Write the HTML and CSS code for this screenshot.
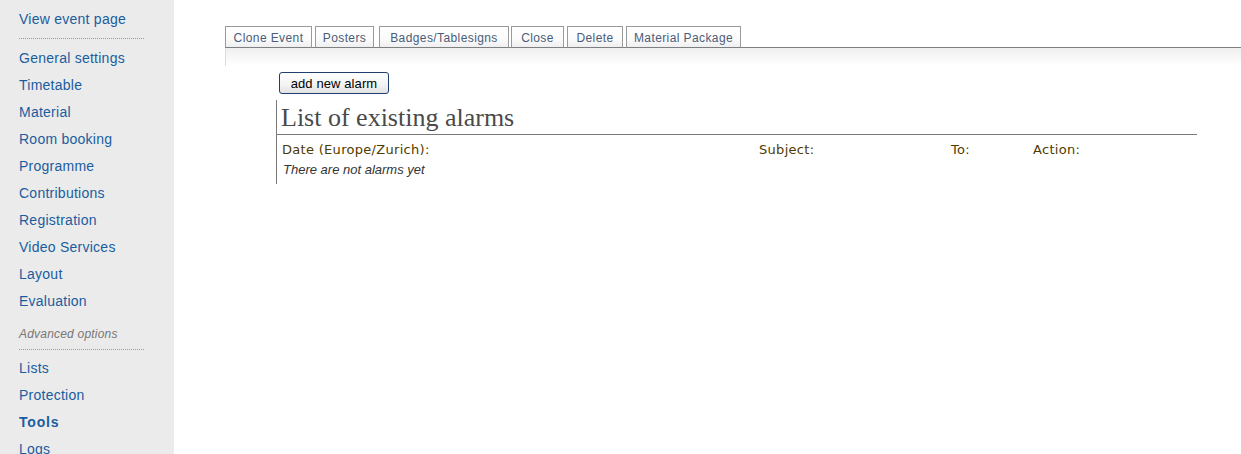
FILE: index.html
```html
<!DOCTYPE html>
<html>
<head>
<meta charset="utf-8">
<link rel="stylesheet" href="styles.css">
</head>
<body>
<div class="page">
  <nav class="sidebar">
    <a class="nav-item" href="#">View event page</a>
    <div class="sep sep-top"></div>
    <a class="nav-item" href="#">General settings</a>
    <a class="nav-item" href="#">Timetable</a>
    <a class="nav-item" href="#">Material</a>
    <a class="nav-item" href="#">Room booking</a>
    <a class="nav-item" href="#">Programme</a>
    <a class="nav-item" href="#">Contributions</a>
    <a class="nav-item" href="#">Registration</a>
    <a class="nav-item" href="#">Video Services</a>
    <a class="nav-item" href="#">Layout</a>
    <a class="nav-item" href="#">Evaluation</a>
    <div class="nav-group">Advanced options</div>
    <div class="sep sep-adv"></div>
    <a class="nav-item" href="#">Lists</a>
    <a class="nav-item" href="#">Protection</a>
    <a class="nav-item active" href="#">Tools</a>
    <a class="nav-item" href="#">Logs</a>
  </nav>
  <main class="content">
    <div class="tabs">
      <span class="tab tab-clone">Clone Event</span>
      <span class="tab tab-posters">Posters</span>
      <span class="tab tab-badges">Badges/Tablesigns</span>
      <span class="tab tab-close">Close</span>
      <span class="tab tab-delete">Delete</span>
      <span class="tab tab-package">Material Package</span>
    </div>
    <div class="tab-shade"></div>
    <div class="body">
      <button class="btn">add new alarm</button>
      <section class="alarms">
        <h2 class="alarms-title">List of existing alarms</h2>
        <div class="alarm-head">
          <span>Date (Europe/Zurich):</span>
          <span>Subject:</span>
          <span>To:</span>
          <span>Action:</span>
        </div>
        <div class="empty">There are not alarms yet</div>
      </section>
    </div>
  </main>
</div>
</body>
</html>
```

FILE: styles.css
```css
html, body {
  margin: 0;
  padding: 0;
  background: #fff;
}
body {
  font-family: "Liberation Sans", Arial, sans-serif;
  overflow: hidden;
  height: 454px;
}
.page {
  display: flex;
  height: 454px;
}
.sidebar {
  width: 174px;
  flex: 0 0 174px;
  background: #ebebeb;
  padding: 6px 0 0 19px;
  box-sizing: border-box;
  display: flex;
  flex-direction: column;
  overflow: hidden;
}
.nav-item {
  display: block;
  font-size: 14px;
  letter-spacing: 0.25px;
  line-height: 27px;
  height: 27px;
  color: #1a5d9f;
  text-decoration: none;
  white-space: nowrap;
}
.nav-item.active {
  font-weight: bold;
  letter-spacing: 0.8px;
}
.sep {
  width: 125px;
  border-top: 1px dotted #9a9a9a;
  flex: 0 0 auto;
}
.sep-top {
  margin: 5px 0 6px;
}
.nav-group {
  margin-top: 6px;
  font-size: 12px;
  font-style: italic;
  letter-spacing: 0.2px;
  color: #777;
  line-height: 27px;
  height: 27px;
}
.sep-adv {
  margin: 1px 0 5px;
}
.content {
  flex: 1;
  padding: 26px 0 0 51px;
  min-width: 0;
}
.tabs {
  display: flex;
  border-bottom: 1px solid #7f7f7f;
  height: 21px;
  align-items: flex-end;
}
.tab {
  box-sizing: border-box;
  height: 22px;
  margin-bottom: -1px;
  margin-right: 3px;
  padding-top: 3px;
  text-align: center;
  border: 1px solid #9a9a9a;
  border-bottom: 1px solid #7f7f7f;
  background: linear-gradient(#ffffff 0%, #fbfbfb 60%, #eeeff1 100%);
  font-size: 12px;
  letter-spacing: 0.4px;
  line-height: 17px;
  color: #4a5d78;
  white-space: nowrap;
}
.tab-clone { width: 87px; }
.tab-posters { width: 59px; margin-right: 5px; }
.tab-badges { width: 130px; margin-right: 2px; }
.tab-close { width: 53px; }
.tab-delete { width: 56px; }
.tab-package { width: 115px; }
.tab-shade {
  height: 18px;
  background: linear-gradient(#efefef, #ffffff);
  border-left: 1px solid #dcdcdc;
}
.body {
  padding: 6px 0 0 54px;
}
.btn {
  display: block;
  box-sizing: border-box;
  width: 110px;
  height: 22px;
  padding: 0;
  border: 1px solid #1f3f6c;
  border-radius: 3px;
  background: linear-gradient(#ffffff, #f3f3f3 60%, #e2e2e2);
  font-family: "Liberation Sans", Arial, sans-serif;
  font-size: 13px;
  letter-spacing: 0.1px;
  color: #000;
}
.alarms {
  margin: 6px 0 0 -3px;
  width: 920px;
  border-left: 1px solid #7a7a7a;
  padding-bottom: 4px;
}
.alarms-title {
  margin: 0;
  padding: 3px 0 1px 4px;
  line-height: 30px;
  font-family: "Liberation Serif", "Times New Roman", serif;
  font-weight: normal;
  font-size: 26px;
  color: #4a4a4a;
  border-bottom: 1px solid #7a7a7a;
}
.alarm-head {
  display: grid;
  grid-template-columns: 477px 192px 82px auto;
  margin-top: 5px;
  padding-left: 5px;
  font-family: "DejaVu Sans", Verdana, sans-serif;
  font-size: 13px;
  letter-spacing: 0.3px;
  line-height: 20px;
  color: #4f3b00;
}
.empty {
  padding-left: 6px;
  font-size: 13px;
  font-style: italic;
  line-height: 20px;
  color: #333;
}
```
